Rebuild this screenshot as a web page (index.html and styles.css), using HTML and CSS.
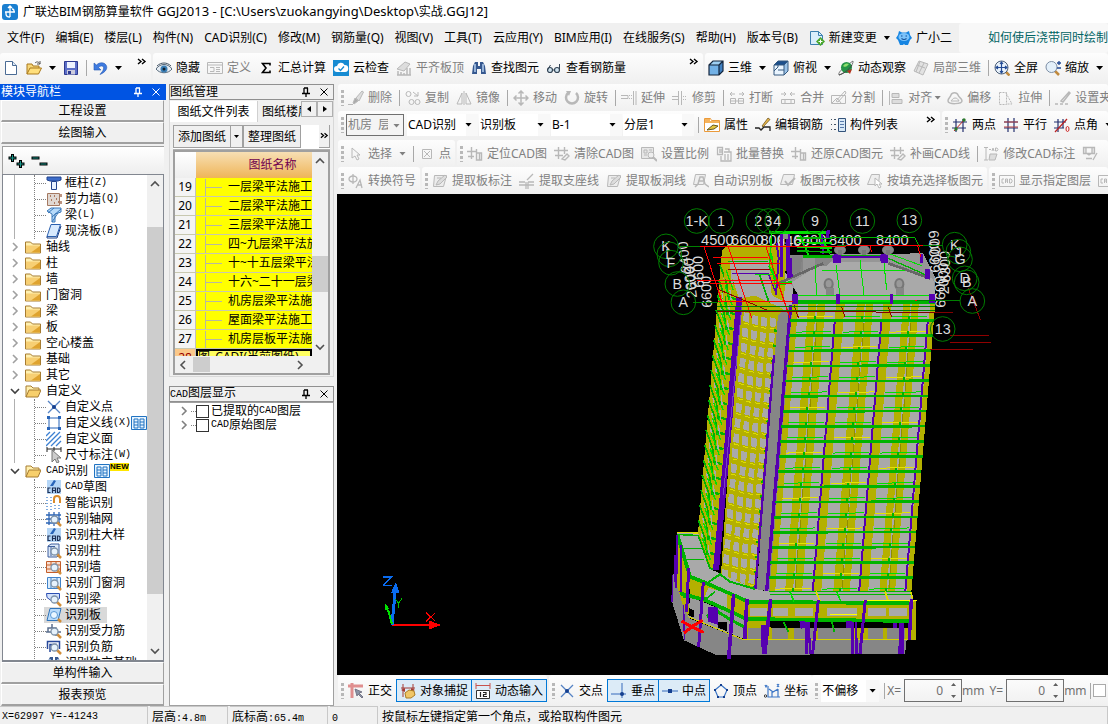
FILE: index.html
```
<!DOCTYPE html>
<html lang="zh-CN">
<head>
    <meta charset="UTF-8">
    <meta name="viewport" content="width=device-width, initial-scale=1.0">
    <title>广联达BIM钢筋算量软件 GGJ2013</title>
    <link rel="stylesheet" href="styles.css">
</head>
<body>
    <svg class="sprite" aria-hidden="true">
        <symbol id="new" viewBox="0 0 16 16"><path d="M2.500 1.500h7l4 4v9h-11z" fill="#fff" stroke="#4a6b94"/><path d="M9.500 1.500v4h4" fill="#dce8f6" stroke="#4a6b94"/></symbol>
        <symbol id="open" viewBox="0 0 16 16"><path d="M1 14V4h5l1 2h6v3" fill="#f7d779" stroke="#a9781d"/><path d="M1 14l3-6h11.500l-3 6z" fill="#ffdf7c" stroke="#a9781d"/><path d="M9 3c2-2 4-1 5 1m0-3v3h-3" fill="none" stroke="#555"/></symbol>
        <symbol id="save" viewBox="0 0 16 16"><path d="M1.500 1.500h13v13h-13z" fill="#5c6fc8" stroke="#2d3990"/><path d="M4 2h8v6H4z" fill="#eef3ff"/><path d="M4 10h8v4.500H4z" fill="#ccd"/><path d="M5 11h3v3H5z" fill="#2d3990"/></symbol>
        <symbol id="undo" viewBox="0 0 16 16"><path d="M2 3v7h7L6.500 7.500c3-3 6-1 5 1.500-.4 2-2 3.500-3.500 5.500 6-2.500 8-6.500 6-9.500S7.500 2 4.500 5z" fill="#3f7be0" stroke="#2458b4" stroke-width=".6"/></symbol>
        <symbol id="eye" viewBox="0 0 16 16"><path d="M0 9c4-6 12-6 16 0-4 5-12 5-16 0z" fill="#e7eef5" stroke="#567"/><circle cx="8" cy="9" r="3.500" fill="#3a7eb5"/><circle cx="8" cy="9" r="1.500" fill="#102030"/><path d="M1 6c4-4 10-4 14 0" fill="none" stroke="#456"/></symbol>
        <symbol id="form" viewBox="0 0 16 16"><path d="M.5 2.500h15v11H.5zM.5 5h15M3 7.500h4v4H3m6-4h4M9 9.500h4M9 11.500h4" fill="none" stroke="currentColor"/></symbol>
        <symbol id="sigma" viewBox="0 0 16 16"><path d="M12 5.500V3.500H4.500L8 8l-3.500 4.500H12v-2" fill="none" stroke="#000" stroke-width="1.600"/></symbol>
        <symbol id="cloud" viewBox="0 0 16 16"><rect width="16" height="16" fill="#168bd2"/><path d="M4 12a3 3 0 010-6 4 4 0 017.500-1A3.500 3.500 0 0112 12z" fill="#fff"/><path d="M5.500 8.500l2 2 3.500-4" fill="none" stroke="#168bd2" stroke-width="1.300"/></symbol>
        <symbol id="slope" viewBox="0 0 16 16"><path d="M1 9l8-7 5 2-6 7z" fill="#ddd" stroke="currentColor"/><path d="M2 15v-4m3 4v-3m3 3v-2m3 2V8m3 7V8M1 15h14" stroke="currentColor" stroke-width="1.500"/></symbol>
        <symbol id="find" viewBox="0 0 16 16"><path d="M2 6l2-4h3v4h2V2h3l2 4 1 8h-5V9H6v5H1z" fill="#36588f"/><path d="M4 4v8m8-8v8" stroke="#b6d0ef" stroke-width="1.500"/></symbol>
        <symbol id="glasses" viewBox="0 0 16 16"><circle cx="4" cy="10" r="2.500" fill="#cfe3ef" stroke="#345" stroke-width="1.200"/><circle cx="11" cy="10" r="2.500" fill="#cfe3ef" stroke="#345" stroke-width="1.200"/><path d="M1.500 10l3-5M13.500 10V4M6.500 10h2" fill="none" stroke="#345"/></symbol>
        <symbol id="cube" viewBox="0 0 16 16"><path d="M1 5l4-4h10l-4 4z" fill="#9fd0f3"/><path d="M11 5l4-4v10l-4 4z" fill="#3f7fc0"/><path d="M1 5h10v10H1z" fill="#72b1e6"/><path d="M1 5l4-4h10v10l-4 4H1zM1 5h10v10m0-10l4-4" fill="none" stroke="#14263d" stroke-width="1.200"/></symbol>
        <symbol id="top" viewBox="0 0 16 16"><path d="M1 5l4-4h10l-4 4z" fill="#1c4f8c"/><path d="M1 5h10v10H1z" fill="#eaf5ff"/><path d="M11 5l4-4v10l-4 4z" fill="#9cc3e8"/><path d="M1 5l4-4h10v10l-4 4H1zM1 5h10v10M1 11l4-4v-2m0 5h6m0-5l4-4" fill="none" stroke="#34597f"/></symbol>
        <symbol id="orbit" viewBox="0 0 16 16"><path d="M1 15c-2-3 8-10 14-14 1 4-8 12-14 14z" fill="none" stroke="#777"/><circle cx="8.500" cy="7.500" r="5.500" fill="#259447"/><path d="M5 6c2-3 4-3 6-2-2 2-3 4-6 2z" fill="#8fe06c"/><path d="M1 15c4-1 10-5 13-10" fill="none" stroke="#444"/><path d="M9 11l5-2-2 5z" fill="#b5341f"/></symbol>
        <symbol id="part" viewBox="0 0 16 16"><path d="M1 11L6 1l9 3-5 11zM4 5l8 3M7 1.500L3 12m8-9L6 13" fill="#e2e2e2" stroke="currentColor"/></symbol>
        <symbol id="full" viewBox="0 0 16 16"><path d="M11.500 11.500l4 4" stroke="#c08a3e" stroke-width="2.500"/><circle cx="7.500" cy="7.500" r="6.500" fill="#eaf3fc" stroke="#4c5f78"/><path d="M7.500 2.500v10m-5-5h10M6 4l1.500-2L9 4M6 11l1.500 2L9 11M4 6L2 7.500 4 9m7-3l2 1.500L11 9" fill="none" stroke="#234b95" stroke-width="1.200"/></symbol>
        <symbol id="zoom" viewBox="0 0 16 16"><path d="M10 11l4 4" stroke="#c08a3e" stroke-width="2.500"/><circle cx="6.500" cy="7" r="5.500" fill="#e4f0fa" stroke="#7d8ea5"/><path d="M14 1v4m-2-2h4M12 8h4" stroke="#234b95" stroke-width="1.300"/></symbol>
        <symbol id="change" viewBox="0 0 16 16"><path d="M1.500 1.500h8l4 4v9h-12z" fill="#d9eefb" stroke="#3b7fae"/><path d="M9.500 1.500v4h4" fill="none" stroke="#3b7fae"/><path d="M11.500 7l4.500 4.500-4.500 4.500L7 11.500z" fill="#49a72a"/><path d="M11.500 9.500v4m-2-2h4" stroke="#fff"/></symbol>
        <symbol id="robot" viewBox="0 0 16 16"><path d="M2 5l1-4 3 1.500h4L13 1l1 4 2 3-2 2-2 5H9l-1-1-1 1H4l-2-5-2-2z" fill="#1685e2"/><ellipse cx="8" cy="7" rx="5.500" ry="4" fill="#7cc3fa"/><path d="M5 6h1.500M9.500 6H11M5.500 8.500q2.500 2 5 0" fill="none" stroke="#114f96" stroke-width="1.200"/></symbol>
        <symbol id="brush" viewBox="0 0 16 16"><path d="M0 14.500h5M5 13l2-5 3 3-4 3z" fill="#aaa" stroke="currentColor"/><path d="M8 8l6-7 1.500 1L11 11z" fill="#ddd" stroke="currentColor"/></symbol>
        <symbol id="copy" viewBox="0 0 16 16"><circle cx="3.500" cy="4" r="2.500" fill="none" stroke="currentColor"/><circle cx="6.500" cy="12" r="2.500" fill="none" stroke="currentColor"/><circle cx="12.500" cy="12" r="2.500" fill="none" stroke="currentColor"/><path d="M8 2l5 4m0-4v4H9" fill="none" stroke="currentColor"/></symbol>
        <symbol id="mirror" viewBox="0 0 16 16"><path d="M6 3v11H1zM10 3v11h5zM8 1v14" fill="none" stroke="currentColor"/></symbol>
        <symbol id="move" viewBox="0 0 16 16"><path d="M8 1v14M1 8h14M5.500 3.500L8 1l2.500 2.500m-5 9L8 15l2.500-2.500m-7-7L1 8l2.500 2.500m9-5L15 8l-2.500 2.500" fill="none" stroke="currentColor" stroke-width="1.500"/></symbol>
        <symbol id="rotate" viewBox="0 0 16 16"><path d="M4 3a6 6 0 108 0" fill="none" stroke="currentColor" stroke-width="2.500"/><path d="M7 1H2l3 5z" fill="currentColor"/></symbol>
        <symbol id="extend" viewBox="0 0 16 16"><path d="M0 5.500h7v3H0M8 5.500h1m1 0h1m-3 3h1m1 0h1M12.500 1v14M15 1v14" fill="none" stroke="currentColor"/></symbol>
        <symbol id="trim" viewBox="0 0 16 16"><path d="M0 6.500h6m0 3H0M6.500 1v14m3-14v14M11 6.500h1m1 0h1m-3 3h1m1 0h1" fill="none" stroke="currentColor"/></symbol>
        <symbol id="break" viewBox="0 0 16 16"><path d="M1.500 8.500h5v5h-5zM9.500 8.500h5v5h-5zM1 11h14M1 4h5m4 0h5M3 2L1 4l2 2m10-4l2 2-2 2" fill="none" stroke="currentColor"/></symbol>
        <symbol id="merge" viewBox="0 0 16 16"><path d="M1.500 9.500h13v4h-13zM1 4h5m4 0h5M4 2l2 2-2 2m8-4l-2 2 2 2M5 9v5m6-5v5" fill="none" stroke="currentColor"/></symbol>
        <symbol id="split" viewBox="0 0 16 16"><path d="M.5 5.500h14v8H.5zM1 13l5-5 4 5M5 11L14 1l1 2-8 9z" fill="none" stroke="currentColor"/></symbol>
        <symbol id="align" viewBox="0 0 16 16"><path d="M1.500 1v14M4 3.500h7v4H4zM4 9.500h10v4H4z" fill="#ddd" stroke="currentColor"/></symbol>
        <symbol id="offset" viewBox="0 0 16 16"><path d="M1 11c0-3 2-3 3-6s6-3 7 0 4 3 4 6-14 4-14 0z" fill="none" stroke="currentColor" stroke-width="1.500"/><path d="M4 11c1-1 2-3 4-3s3 1 4 3z" fill="none" stroke="currentColor"/></symbol>
        <symbol id="stretch" viewBox="0 0 16 16"><path d="M1.500 2.500h7v12h-7zM8 3l6 11h-5" fill="none" stroke="currentColor" stroke-dasharray="2 1"/></symbol>
        <symbol id="grippt" viewBox="0 0 16 16"><path d="M0 14h3m2 0h3m2 0h3M6 11l8-9 1 1-7 9z" fill="none" stroke="currentColor" stroke-width="1.500"/></symbol>
        <symbol id="prop" viewBox="0 0 16 16"><path d="M.5 1.500h6l1 2h8v11H.5z" fill="#fff" stroke="#eb9a3a"/><path d="M1 2h5v2h9v2H1z" fill="#f5b35c"/><path d="M3 13l6-5 5 1-4 3z" fill="#e5c53d" stroke="#665820"/></symbol>
        <symbol id="rebar" viewBox="0 0 16 16"><path d="M0 11h4l2 2 3-3h6v4" fill="none" stroke="#222" stroke-width="1.300"/><path d="M7 9l6-8 2 1.500L8 10z" fill="#e8b84d" stroke="#5c4410" stroke-width=".7"/></symbol>
        <symbol id="list" viewBox="0 0 16 16"><path d="M1 2.500h1M1 7.500h1M1 12.500h1M4 2.500h2M4 7.500h2M4 12.500h2" stroke="#456"/><path d="M8.500 1.500h7v13h-7z" fill="#d7e8f7" stroke="#33527a"/><path d="M10 4.500h4m-4 3h4m-4 3h4" stroke="#5a7bab"/></symbol>
        <symbol id="two" viewBox="0 0 16 16"><path d="M4 2v13M11 2v13M1 5h14M0 11h14" stroke="#23306e" stroke-width="1.200"/><path d="M2 14L13 2" stroke="#b22"/><circle cx="12" cy="3" r="1.700" fill="#2c7a2c"/><circle cx="4" cy="12" r="1.700" fill="#2c7a2c"/></symbol>
        <symbol id="para" viewBox="0 0 16 16"><path d="M5 1v14M11 1v14M1 5h14M1 11h14" stroke="#23306e" stroke-width="1.200"/><path d="M1 5h14M1 10h14" stroke="#b44"/></symbol>
        <symbol id="angle" viewBox="0 0 16 16"><path d="M4 2v13M9 2v9M0 5h12M0 11h10" stroke="#23306e" stroke-width="1.200"/><path d="M1 15L13 2" stroke="#b22" stroke-width="1.200"/><ellipse cx="13.500" cy="12" rx="1.500" ry="2.500" fill="none" stroke="#c22"/></symbol>
        <symbol id="cursor" viewBox="0 0 16 16"><path d="M4 2v10l3-2 2 4 2-1-2-4h3z" fill="#f6f6f6" stroke="currentColor"/></symbol>
        <symbol id="dot" viewBox="0 0 16 16"><path d="M3.500 3.500h9v9h-9zM5 5l6 6m0-6l-6 6" fill="none" stroke="currentColor"/></symbol>
        <symbol id="grid" viewBox="0 0 16 16"><path d="M4.500 1v12M0 5.500h10M1 10.500h6M9.500 3v11h5V7h-5m3 0v7" fill="none" stroke="currentColor" stroke-width="1.400"/></symbol>
        <symbol id="grid2" viewBox="0 0 16 16"><path d="M4.500 1v12M10.500 1v7M0 4.500h14M1 9.500h8M8 13l5-5 2 2-4 4z" fill="none" stroke="currentColor" stroke-width="1.400"/></symbol>
        <symbol id="scale" viewBox="0 0 16 16"><path d="M.5 1.500h12v11H.5zM3 4h3v3H3zM8 4h3M3 9h3" fill="#e6e6e6" stroke="currentColor"/><circle cx="10" cy="9" r="3" fill="#eee" stroke="currentColor"/><path d="M12 11l4 4" stroke="currentColor" stroke-width="2"/></symbol>
        <symbol id="batch" viewBox="0 0 16 16"><path d="M1.500 1.500h5v7h-5zM3 4h3M3 6h3M5 10v5h10V6H8M9 8v6m3-6v6M9 3h4v3" fill="none" stroke="currentColor" stroke-width="1.300"/></symbol>
        <symbol id="page" viewBox="0 0 16 16"><path d="M2.500 2.500h12l-3 11h-10z" fill="#ececec" stroke="currentColor"/><path d="M4 12l2-4 7-6 2 2-7 7zM5 5h4" fill="#ddd" stroke="currentColor"/></symbol>
        <symbol id="mark" viewBox="0 0 16 16"><path d="M3 1v13M1 1.500h4M1 14h4M6 3.500h2M9 5l1-3 1 3m1.500-3v3H14l1-1.500L14 2z" fill="none" stroke="currentColor"/><path d="M7 8h7l-2 6H6z" fill="#ddd" stroke="currentColor"/></symbol>
        <symbol id="sweep" viewBox="0 0 16 16"><path d="M1.500 1.500h11v6h-11zM4 2v5l3 2 3-2V2M4 12.500h6M11 14l4-7" fill="#e4e4e4" stroke="currentColor" stroke-width="1.300"/></symbol>
        <symbol id="check" viewBox="0 0 16 16"><path d="M3.500 1.500h11l-2 10H.5z" fill="#eee" stroke="currentColor"/><path d="M5 8l3 4 7-7" fill="none" stroke="currentColor" stroke-width="2"/></symbol>
        <symbol id="pick" viewBox="0 0 16 16"><path d="M4.500 1.500h8l-1 10H.5z" fill="#eee" stroke="currentColor"/><path d="M8 5v8l2-2 2 4 2-1-2-3h3z" fill="#fff" stroke="currentColor"/></symbol>
        <symbol id="phi" viewBox="0 0 16 16"><ellipse cx="5" cy="6" rx="4" ry="3" fill="none" stroke="currentColor" stroke-width="1.300"/><path d="M5 1v10M8 15l4-8 2 8m-5-3h5" fill="none" stroke="currentColor" stroke-width="1.300"/></symbol>
        <symbol id="seat" viewBox="0 0 16 16"><path d="M0 9h6m3 0h6M0 12h15M7 9v7m2-7v7M8 7l6-6" fill="none" stroke="currentColor" stroke-width="1.300"/></symbol>
        <symbol id="auto" viewBox="0 0 16 16"><path d="M2.500 1.500h10l-2 10H.5z" fill="#eee" stroke="currentColor"/><path d="M2 14l3-3 2-7h3l2 7 4 3M5 8h7" fill="none" stroke="currentColor" stroke-width="1.500"/></symbol>
        <symbol id="cadbox" viewBox="0 0 16 16"><path d="M.5 2.500h15v11H.5zM5 6H3v4h2m1.500 0V6h2v4m-2-2h2M10.500 6v4h1.500l1-1V7l-1-1z" fill="none" stroke="currentColor"/></symbol>
        <symbol id="ortho" viewBox="0 0 16 16"><path d="M0 3h15M4 0v15" stroke="#e08f8f" stroke-width="3"/><path d="M7 6l7 3-3 1 4 4-1 1-4-4-1 2z" fill="#8a94a5" stroke="#778"/></symbol>
        <symbol id="snap" viewBox="0 0 16 16"><path d="M1 5h14M3 1v13M13 1v9" stroke="#a33a35"/><path d="M1 7l4-2v4zM15 7l-4-2v4z" fill="#a33a35"/><path d="M5 10l4-3 5 1 1 4-4 3H6z" fill="#f0c667" stroke="#ab7c24"/></symbol>
        <symbol id="dyn" viewBox="0 0 16 16"><path d="M1 2.500h14M1 0v6m14-6v6" stroke="#c8524d"/><path d="M1.500 7.500h13v8h-13z" fill="#fff" stroke="#333"/><path d="M5.500 9v5M8 9.500h3v2H8.500v2H12" fill="none" stroke="#222" stroke-width="1.200"/></symbol>
        <symbol id="cross" viewBox="0 0 16 16"><path d="M2 2l12 12m0-12L2 14" stroke="#5583c4" stroke-width="1.300"/><circle cx="8" cy="8" r="2" fill="#143f8f"/></symbol>
        <symbol id="perp" viewBox="0 0 16 16"><path d="M0 11h15M11 0v15" stroke="#6c95cf" stroke-width="1.500"/><circle cx="11" cy="11" r="2" fill="#143f8f"/></symbol>
        <symbol id="mid" viewBox="0 0 16 16"><path d="M0 8h16" stroke="#6c95cf" stroke-width="1.500"/><path d="M6 6h4v4H6z" fill="#143f8f"/></symbol>
        <symbol id="vertex" viewBox="0 0 16 16"><path d="M8 2l6 5-3 7H5L2 7z" fill="none" stroke="#3c76c6" stroke-width="1.200"/><path d="M7 1h2v2H7zM13 6h2v2h-2zM10 13h2v2h-2zM4 13h2v2H4zM1 6h2v2H1z" fill="#143f8f"/></symbol>
        <symbol id="coord" viewBox="0 0 16 16"><path d="M4 3v11h12M1 2l1 2 1-2M13 1l2 3m0-3l-2 3M5 6l4 3 5-3M8 14V9m6 5V6" fill="none" stroke="#3c76c6" stroke-width="1.200"/><circle cx="1.500" cy="13" r="1.200" fill="#fff" stroke="#333"/></symbol>
        <symbol id="folder" viewBox="0 0 16 16"><path d="M.5 14V3h5l2 2h8v9z" fill="#fff0b0" stroke="#a77c31"/><path d="M1 6.500h14V13.500H1z" fill="#f7cf73"/><path d="M15 7v6.500H6z" fill="#dfa32f"/></symbol>
        <symbol id="folderopen" viewBox="0 0 16 16"><path d="M1 14V3h5l2 2h6v3" fill="#fff0b0" stroke="#a77c31"/><path d="M1 14l3-7h12l-3 7z" fill="#f7cf6c" stroke="#a77c31"/></symbol>
        <symbol id="column" viewBox="0 0 16 16"><path d="M1 2h14v3l-3 1H4L1 5z" fill="#3c6cc9" stroke="#23458f"/><path d="M5.500 6.500h5v8h-5z" fill="#e9f2ff" stroke="#23458f"/></symbol>
        <symbol id="wall" viewBox="0 0 16 16"><path d="M1.500 2.500h12v12h-12z" fill="#e0d8d2" stroke="#a57961"/><path d="M4 5h1m3 0h1m-4 4h1m4-1h1m-3 4h1m3-1h1M15 3v3m0 4v3" stroke="#9a5a3b" stroke-width="1.300"/></symbol>
        <symbol id="beam" viewBox="0 0 16 16"><path d="M1 4l4-3h10v4L9 7v8H6V7z" fill="#b6dafa" stroke="#3876b7"/><path d="M2 6L8 1m-2 14l6-9M6 10l9-8" stroke="#3876b7"/></symbol>
        <symbol id="slab" viewBox="0 0 16 16"><path d="M5 1.500h9.500l-4 12H1z" fill="#d8eafe" stroke="#2a5fae"/><path d="M1 13.500V15h10l4-12" fill="none" stroke="#1b3f86"/></symbol>
        <symbol id="line" viewBox="0 0 16 16"><path d="M3 3h10v10H3z" fill="#fff" stroke="#2864b8"/><path d="M1 1h3v3H1zM12 1h3v3h-3zM1 12h3v3H1zM12 12h3v3h-3z" fill="#2864b8"/></symbol>
        <symbol id="hatch" viewBox="0 0 16 16"><path d="M0 5l4-4M0 10L9 1M0 15L14 1M5 15L15 5M10 15l5-5" stroke="#3c80d2" stroke-width="1.300"/></symbol>
        <symbol id="dimension" viewBox="0 0 16 16"><path d="M1 0v5M8 0v4m7-4v5M1 2h14" stroke="#222"/><path d="M6 3v12l3-3 2 4 2-1-2-4h4z" fill="#ccc" stroke="#777"/></symbol>
        <symbol id="cad" viewBox="0 0 16 16"><path d="M1 1h14v14H1z" fill="#b5d6f7"/><path d="M4 7l4-6 2 1-3 5z" fill="#2864b8"/><path d="M4.500 9H2v4.500h2.500M6.500 14V9h3v5m-3-2.500h3M11.500 9v4.500H13l1-1V10l-1-1z" fill="none" stroke="#1d2f55" stroke-width="1.200"/></symbol>
        <symbol id="magnet" viewBox="0 0 16 16"><path d="M1 2v13M5 2v13m4-5v5m4-5v5" stroke="#3c80d2" stroke-width="1.300" stroke-dasharray="1 2"/><path d="M8 8V4a3 3 0 016 0v4" fill="none" stroke="#d98b2b" stroke-width="2"/></symbol>
        <symbol id="lens" viewBox="0 0 16 16"><path d="M11 11l4 4" stroke="#d18d38" stroke-width="2.500"/><circle cx="8.500" cy="8.500" r="3.500" fill="#e6f2fc" stroke="#7f93a8" stroke-width="1.300"/></symbol>
        <symbol id="scan" viewBox="0 0 16 16"><path d="M3 1v13M8 1v14m5-14v13M0 4h15M0 8h15M0 12h14" stroke="#2d65b5" stroke-width="1.300"/><use href="#lens"/></symbol>
        <symbol id="scancol" viewBox="0 0 16 16"><path d="M2 3l3-2h8v11l-2 2H2z" fill="#dbe8f8" stroke="#3e5f9d"/><path d="M2 3.500h7M5 4v9" stroke="#3e5f9d"/><use href="#lens"/></symbol>
        <symbol id="scanwall" viewBox="0 0 16 16"><path d="M.5 2.500h14v11H.5zM1 6h13M1 10h13M5 3v3m5-3v3" fill="#f8ded0" stroke="#c35e2a"/><use href="#lens"/></symbol>
        <symbol id="scandoor" viewBox="0 0 16 16"><path d="M1.500 2.500h13v11h-13zM5 3v10m6-10v10" fill="#d9ecfd" stroke="#3f82c9"/><use href="#lens"/></symbol>
        <symbol id="scanbeam" viewBox="0 0 16 16"><path d="M.5 2.500h13v5l-3 2H5l-4-3z" fill="#d2e1fb" stroke="#2c4fb2"/><use href="#lens"/></symbol>
        <symbol id="scanbar" viewBox="0 0 16 16"><path d="M0 9h15M2 9V5h8v8M6 1v4" fill="none" stroke="#5b6f8e" stroke-width="1.500"/><use href="#lens"/></symbol>
        <symbol id="scanneg" viewBox="0 0 16 16"><path d="M1.500 10V2.500h12V10M4 13V5.500h7" fill="none" stroke="#27489a" stroke-width="1.500"/><use href="#lens"/></symbol>
        <symbol id="scanslab" viewBox="0 0 16 16"><path d="M4 1.500h11l-3 12H1z" fill="#b9dbfa" stroke="#2e73ba"/><circle cx="8" cy="8" r="3.500" fill="#e9f6ff" stroke="#5b9ad6"/><path d="M12 12l3 3" stroke="#d18d38" stroke-width="2.500"/></symbol>
        <symbol id="book" viewBox="0 0 16 16"><path d="M.5 1.500h15v13H.5z" fill="#e8f5ff" stroke="#2173c2"/><path d="M3 4h4v9H3zM9 4h4v9H9zM3 7h4m-4 3h4m2-3h4m-4 3h4" fill="none" stroke="#2173c2"/></symbol>
        <symbol id="pin" viewBox="0 0 10 10"><path d="M3 1v5M6.500 1v5M3 1h4M1 6.500h8M5 6.500V10" fill="none" stroke="currentColor" stroke-width="1.300"/></symbol>
        <symbol id="close" viewBox="0 0 10 10"><path d="M1.500 1.500l7 7m0-7l-7 7" stroke="currentColor"/></symbol>
        <symbol id="right" viewBox="0 0 10 10"><path d="M3 1l4 4-4 4" fill="none" stroke="currentColor" stroke-width="1.600"/></symbol>
        <symbol id="left" viewBox="0 0 10 10"><path d="M7 1L3 5l4 4" fill="none" stroke="currentColor" stroke-width="1.600"/></symbol>
        <symbol id="down" viewBox="0 0 10 10"><path d="M1 3l4 4 4-4" fill="none" stroke="currentColor" stroke-width="1.600"/></symbol>
        <symbol id="up" viewBox="0 0 10 10"><path d="M1 7l4-4 4 4" fill="none" stroke="currentColor" stroke-width="1.600"/></symbol>
        <symbol id="more" viewBox="0 0 10 8"><path d="M1 1l3 2.500L1 6m4-5l3 2.500L5 6" fill="none" stroke="#000" stroke-width="1.400"/></symbol>
    </svg>

    <header class="titlebar">
        <svg class="logo" viewBox="0 0 16 16"><rect width="16" height="16" rx="3" fill="#1a7fd0"/><path d="M8 3v10M3 8h10M6 4l2-2 2 2M4 8v2q0 3 4 3m4-5V7q0-2-2-2" fill="none" stroke="#fff" stroke-width="1.300"/></svg>
        <span>广联达BIM钢筋算量软件 <span class="path">GGJ2013 - [C:\Users\zuokangying\Desktop\</span>实战<span class="path">.GGJ12]</span></span>
    </header>

    <nav class="menubar">
        <button>文件(F)</button><button>编辑(E)</button><button>楼层(L)</button><button>构件(N)</button><button>CAD识别(C)</button><button>修改(M)</button><button>钢筋量(Q)</button><button>视图(V)</button><button>工具(T)</button><button>云应用(Y)</button><button>BIM应用(I)</button><button>在线服务(S)</button><button>帮助(H)</button><button>版本号(B)</button>
        <button class="tool"><svg><use href="#change"/></svg>新建变更</button>
        <button class="drop" aria-label="新建变更选项"></button>
        <button class="tool"><svg><use href="#robot"/></svg>广小二</button>
        <a class="tip" href="#">如何使后浇带同时绘制</a>
    </nav>

    <div class="row main-tools">
        <div class="strip file">
            <button class="tool" aria-label="新建"><svg><use href="#new"/></svg></button>
            <button class="tool" aria-label="打开"><svg><use href="#open"/></svg></button>
            <button class="drop" aria-label="最近文件"></button>
            <button class="tool" aria-label="保存"><svg><use href="#save"/></svg></button>
            <i class="sep"></i>
            <button class="tool" aria-label="撤销"><svg><use href="#undo"/></svg></button>
            <button class="drop" aria-label="撤销列表"></button>
            <button class="more" aria-label="更多"><svg><use href="#more"/></svg></button>
        </div>
        <div class="strip calc">
            <button class="tool"><svg><use href="#eye"/></svg>隐藏</button>
            <button class="tool" disabled><svg><use href="#form"/></svg>定义</button>
            <button class="tool"><svg><use href="#sigma"/></svg>汇总计算</button>
            <button class="tool"><svg><use href="#cloud"/></svg>云检查</button>
            <button class="tool" disabled><svg><use href="#slope"/></svg>平齐板顶</button>
            <button class="tool"><svg><use href="#find"/></svg>查找图元</button>
            <button class="tool"><svg><use href="#glasses"/></svg>查看钢筋量</button>
            <button class="more" aria-label="更多"><svg><use href="#more"/></svg></button>
        </div>
        <div class="strip grow">
            <button class="tool"><svg><use href="#cube"/></svg>三维</button>
            <button class="drop" aria-label="三维选项"></button>
            <button class="tool"><svg><use href="#top"/></svg>俯视</button>
            <button class="drop" aria-label="俯视选项"></button>
            <button class="tool"><svg><use href="#orbit"/></svg>动态观察</button>
            <button class="tool" disabled><svg><use href="#part"/></svg>局部三维</button>
            <i class="sep"></i>
            <button class="tool"><svg><use href="#full"/></svg>全屏</button>
            <button class="tool"><svg><use href="#zoom"/></svg>缩放</button>
            <button class="drop" aria-label="缩放选项"></button>
        </div>
    </div>

    <div class="work">
        <aside class="nav">
            <div class="caption active"><span>模块导航栏</span><button aria-label="固定"><svg><use href="#pin"/></svg></button><button aria-label="关闭"><svg><use href="#close"/></svg></button></div>
            <button class="stack">工程设置</button>
            <button class="stack">绘图输入</button>
            <div class="expand">
                <button aria-label="全部展开"><svg viewBox="0 0 18 16"><path d="M4.500 1v8M.5 5h8M12.500 7v8M8.500 11h8" stroke="#000" stroke-width="3"/><path d="M4.500 2v6M1.500 5h6M12.500 8v6M9.500 11h6" stroke="#169488"/></svg></button>
                <button aria-label="全部折叠"><svg viewBox="0 0 18 16"><path d="M.5 5h8M8.500 11h8" stroke="#000" stroke-width="3"/><path d="M1.500 5h6M9.500 11h6" stroke="#169488"/></svg></button>
            </div>
            <div class="treebox">
                <ul class="tree">
                    <li>
                        <ul class="more-below">
                            <li><svg><use href="#column"/></svg>框柱<b>(Z)</b></li>
                            <li><svg><use href="#wall"/></svg>剪力墙<b>(Q)</b></li>
                            <li><svg><use href="#beam"/></svg>梁<b>(L)</b></li>
                            <li><svg><use href="#slab"/></svg>现浇板<b>(B)</b></li>
                        </ul>
                    </li>
                    <li><div class="node"><svg class="chev"><use href="#right"/></svg><svg><use href="#folder"/></svg>轴线</div></li>
                    <li><div class="node"><svg class="chev"><use href="#right"/></svg><svg><use href="#folder"/></svg>柱</div></li>
                    <li><div class="node"><svg class="chev"><use href="#right"/></svg><svg><use href="#folder"/></svg>墙</div></li>
                    <li><div class="node"><svg class="chev"><use href="#right"/></svg><svg><use href="#folder"/></svg>门窗洞</div></li>
                    <li><div class="node"><svg class="chev"><use href="#right"/></svg><svg><use href="#folder"/></svg>梁</div></li>
                    <li><div class="node"><svg class="chev"><use href="#right"/></svg><svg><use href="#folder"/></svg>板</div></li>
                    <li><div class="node"><svg class="chev"><use href="#right"/></svg><svg><use href="#folder"/></svg>空心楼盖</div></li>
                    <li><div class="node"><svg class="chev"><use href="#right"/></svg><svg><use href="#folder"/></svg>基础</div></li>
                    <li><div class="node"><svg class="chev"><use href="#right"/></svg><svg><use href="#folder"/></svg>其它</div></li>
                    <li>
                        <div class="node open"><svg class="chev"><use href="#down"/></svg><svg><use href="#folderopen"/></svg>自定义</div>
                        <ul class="more-below">
                            <li><svg><use href="#cross"/></svg>自定义点</li>
                            <li><svg><use href="#line"/></svg>自定义线<b>(X)</b><svg class="badge"><use href="#book"/></svg></li>
                            <li><svg><use href="#hatch"/></svg>自定义面</li>
                            <li><svg><use href="#dimension"/></svg>尺寸标注<b>(W)</b></li>
                        </ul>
                    </li>
                    <li>
                        <div class="node open"><svg class="chev"><use href="#down"/></svg><svg><use href="#folderopen"/></svg><b>CAD</b>识别<svg class="badge wide"><use href="#book"/></svg><em>NEW</em></div>
                        <ul>
                            <li><svg><use href="#cad"/></svg><b>CAD</b>草图</li>
                            <li><svg><use href="#magnet"/></svg>智能识别</li>
                            <li><svg><use href="#scan"/></svg>识别轴网</li>
                            <li><svg><use href="#cad"/></svg>识别柱大样</li>
                            <li><svg><use href="#scancol"/></svg>识别柱</li>
                            <li><svg><use href="#scanwall"/></svg>识别墙</li>
                            <li><svg><use href="#scandoor"/></svg>识别门窗洞</li>
                            <li><svg><use href="#scanbeam"/></svg>识别梁</li>
                            <li class="selected"><svg><use href="#scanslab"/></svg>识别板</li>
                            <li><svg><use href="#scanbar"/></svg>识别受力筋</li>
                            <li><svg><use href="#scanneg"/></svg>识别负筋</li>
                            <li><svg><use href="#find"/></svg>识别独立基础</li>
                        </ul>
                    </li>
                </ul>
                <div class="vbar"><svg><use href="#up"/></svg><i class="thumb"></i><svg><use href="#down"/></svg></div>
            </div>
            <button class="stack">单构件输入</button>
            <button class="stack">报表预览</button>
        </aside>

        <aside class="side">
            <div class="caption"><span>图纸管理</span><button aria-label="固定"><svg><use href="#pin"/></svg></button><button aria-label="关闭"><svg><use href="#close"/></svg></button></div>
            <section class="drawings">
                <div class="tabs"><button class="on">图纸文件列表</button><button class="cut">图纸楼层</button><button class="step" aria-label="上一页"><i class="lt"></i></button><button class="step" aria-label="下一页"><i class="gt"></i></button></div>
                <div class="actions"><button>添加图纸</button><button class="split" aria-label="添加图纸选项"><i class="tri"></i></button><button>整理图纸</button><button class="over" aria-label="更多"><svg><use href="#more"/></svg></button></div>
                <div class="gridbox">
                    <div class="gridtop">
                        <div class="clip">
                            <table>
                                <thead><tr><th></th><th>图纸名称</th></tr></thead>
                                <tbody>
                                    <tr><td>19</td><td>一层梁平法施工图</td></tr>
                                    <tr><td>20</td><td>二层梁平法施工图</td></tr>
                                    <tr><td>21</td><td>三层梁平法施工图</td></tr>
                                    <tr><td>22</td><td>四~九层梁平法施工图</td></tr>
                                    <tr><td>23</td><td>十~十五层梁平法施工图</td></tr>
                                    <tr><td>24</td><td>十六~二十一层梁平法施工图</td></tr>
                                    <tr><td>25</td><td>机房层梁平法施工图</td></tr>
                                    <tr><td>26</td><td>屋面梁平法施工图</td></tr>
                                    <tr><td>27</td><td>机房层板平法施工图</td></tr>
                                    <tr class="current"><td>28</td><td>图_CADI(当前图纸)</td></tr>
                                </tbody>
                            </table>
                        </div>
                        <div class="vbar"><svg><use href="#up"/></svg><i class="thumb"></i><svg><use href="#down"/></svg></div>
                    </div>
                    <div class="hbar"><svg><use href="#left"/></svg><i class="thumb"></i><svg><use href="#right"/></svg></div>
                </div>
            </section>
            <div class="caption second"><span><b>CAD</b>图层显示</span><button aria-label="固定"><svg><use href="#pin"/></svg></button><button aria-label="关闭"><svg><use href="#close"/></svg></button></div>
            <section class="layers">
                <label><svg><use href="#right"/></svg><i></i><input type="checkbox">已提取的<b>CAD</b>图层</label>
                <label><svg><use href="#right"/></svg><i></i><input type="checkbox"><b>CAD</b>原始图层</label>
            </section>
        </aside>

        <main>
            <div class="bars">
                <div class="row">
                    <div class="strip grow">
                        <i class="grip"></i>
                        <button class="tool" disabled><svg><use href="#brush"/></svg>删除</button>
                        <i class="sep"></i>
                        <button class="tool" disabled><svg><use href="#copy"/></svg>复制</button>
                        <button class="tool" disabled><svg><use href="#mirror"/></svg>镜像</button>
                        <i class="sep"></i>
                        <button class="tool" disabled><svg><use href="#move"/></svg>移动</button>
                        <button class="tool" disabled><svg><use href="#rotate"/></svg>旋转</button>
                        <i class="sep"></i>
                        <button class="tool" disabled><svg><use href="#extend"/></svg>延伸</button>
                        <button class="tool" disabled><svg><use href="#trim"/></svg>修剪</button>
                        <i class="sep"></i>
                        <button class="tool" disabled><svg><use href="#break"/></svg>打断</button>
                        <button class="tool" disabled><svg><use href="#merge"/></svg>合并</button>
                        <button class="tool" disabled><svg><use href="#split"/></svg>分割</button>
                        <i class="sep"></i>
                        <button class="tool" disabled><svg><use href="#align"/></svg>对齐<i class="tri"></i></button>
                        <button class="tool" disabled><svg><use href="#offset"/></svg>偏移</button>
                        <button class="tool" disabled><svg><use href="#stretch"/></svg>拉伸</button>
                        <i class="sep"></i>
                        <button class="tool" disabled><svg><use href="#grippt"/></svg>设置夹点</button>
                    </div>
                </div>
                <div class="row">
                    <div class="strip member">
                        <i class="grip"></i>
                        <div class="combos">
                            <label class="combo framed"><select aria-label="楼层" disabled><option>机房&nbsp;&nbsp;层</option></select></label>
                            <label class="combo"><select aria-label="构件大类"><option>CAD识别</option></select></label>
                            <label class="combo"><select aria-label="构件类型"><option>识别板</option></select></label>
                            <label class="combo"><select aria-label="构件"><option>B-1</option></select></label>
                            <label class="combo"><select aria-label="分层"><option>分层1</option></select></label>
                        </div>
                        <i class="sep"></i>
                        <button class="tool"><svg><use href="#prop"/></svg>属性</button>
                        <button class="tool"><svg><use href="#rebar"/></svg>编辑钢筋</button>
                        <button class="tool"><svg><use href="#list"/></svg>构件列表</button>
                        <button class="more" aria-label="更多"><svg><use href="#more"/></svg></button>
                    </div>
                    <div class="strip grow">
                        <i class="grip"></i>
                        <button class="tool"><svg><use href="#two"/></svg>两点</button>
                        <button class="tool"><svg><use href="#para"/></svg>平行</button>
                        <button class="tool"><svg><use href="#angle"/></svg>点角</button>
                        <button class="drop" aria-label="点角选项"></button>
                    </div>
                </div>
            </div>
            <div class="bars">
                <div class="row">
                    <div class="strip">
                        <i class="grip"></i>
                        <button class="tool" disabled><svg><use href="#cursor"/></svg>选择</button>
                        <button class="drop" disabled aria-label="选择方式"></button>
                        <i class="sep"></i>
                        <button class="tool" disabled><svg><use href="#dot"/></svg>点</button>
                    </div>
                    <div class="strip grow">
                        <i class="grip"></i>
                        <button class="tool" disabled><svg><use href="#grid"/></svg>定位CAD图</button>
                        <button class="tool" disabled><svg><use href="#grid2"/></svg>清除CAD图</button>
                        <button class="tool" disabled><svg><use href="#scale"/></svg>设置比例</button>
                        <button class="tool" disabled><svg><use href="#batch"/></svg>批量替换</button>
                        <button class="tool" disabled><svg><use href="#grid"/></svg>还原CAD图元</button>
                        <button class="tool" disabled><svg><use href="#grid2"/></svg>补画CAD线</button>
                        <i class="sep"></i>
                        <button class="tool" disabled><svg><use href="#mark"/></svg>修改CAD标注</button>
                        <button class="tool" disabled aria-label="图层刷"><svg><use href="#sweep"/></svg></button>
                    </div>
                </div>
                <div class="row">
                    <div class="strip">
                        <i class="grip"></i>
                        <button class="tool" disabled><svg><use href="#phi"/></svg>转换符号</button>
                    </div>
                    <div class="strip">
                        <i class="grip"></i>
                        <button class="tool" disabled><svg><use href="#page"/></svg>提取板标注</button>
                        <button class="tool" disabled><svg><use href="#seat"/></svg>提取支座线</button>
                        <button class="tool" disabled><svg><use href="#page"/></svg>提取板洞线</button>
                        <button class="tool" disabled><svg><use href="#auto"/></svg>自动识别板</button>
                        <button class="tool" disabled><svg><use href="#check"/></svg>板图元校核</button>
                        <button class="tool" disabled><svg><use href="#pick"/></svg>按填充选择板图元</button>
                    </div>
                    <div class="strip grow">
                        <i class="grip"></i>
                        <button class="tool" disabled><svg><use href="#cadbox"/></svg>显示指定图层</button>
                        <button class="tool" disabled aria-label="隐藏指定图层"><svg><use href="#cadbox"/></svg></button>
                    </div>
                </div>
            </div>

            <div class="viewport">
                <svg id="model" viewBox="-909 -3 2313 1443" role="img" aria-label="三维模型"></svg>
            </div>

            <div class="row bottom">
                <div class="strip">
                    <i class="grip"></i>
                    <button class="tool"><svg><use href="#ortho"/></svg>正交</button>
                    <div class="toggles"><button class="tool on"><svg><use href="#snap"/></svg>对象捕捉</button><button class="tool on"><svg><use href="#dyn"/></svg>动态输入</button></div>
                </div>
                <div class="strip">
                    <i class="grip"></i>
                    <button class="tool"><svg><use href="#cross"/></svg>交点</button>
                    <div class="toggles"><button class="tool on"><svg><use href="#perp"/></svg>垂点</button><button class="tool on"><svg><use href="#mid"/></svg>中点</button></div>
                    <button class="tool"><svg><use href="#vertex"/></svg>顶点</button>
                    <button class="tool"><svg><use href="#coord"/></svg>坐标</button>
                </div>
                <div class="strip grow offset">
                    <i class="grip"></i>
                    <label class="combo short"><select aria-label="偏移方式"><option>不偏移</option></select></label>
                    <i class="sep"></i>
                    <label class="spin">X= <input type="text" value="0" disabled><i class="arrows"></i>mm</label>
                    <label class="spin">Y= <input type="text" value="0" disabled><i class="arrows"></i>mm</label>
                    <i class="sep"></i>
                    <input type="checkbox" aria-label="旋转" disabled>
                </div>
            </div>
        </main>
    </div>

    <footer class="status">
        <span class="xy">X=62997 Y=-41243</span>
        <span class="floor">层高<b>:4.8m</b></span>
        <span class="level">底标高<b>:65.4m</b></span>
        <span class="count"><b>0</b></span>
        <span class="hint">按鼠标左键指定第一个角点，或拾取构件图元</span>
    </footer>

    <script src="model.js"></script>
</body>
</html>
```
FILE: styles.css
```
* {
    box-sizing: border-box;
}
body {
    margin: 0;
    height: 100vh;
    display: flex;
    flex-direction: column;
    overflow: hidden;
    background: #f0f0f0;
    color: #000;
    font: 12px/16px "Noto Sans", "Noto Sans CJK SC", sans-serif;
}
button, select, input {
    font: inherit;
    color: inherit;
    margin: 0;
    padding: 0;
    border: 0;
    background: none;
    white-space: nowrap;
}
ul {
    list-style: none;
    margin: 0;
    padding: 0;
}
svg {
    flex: none;
}
b {
    font: 10px/16px "Liberation Mono", monospace;
}
.sprite {
    position: absolute;
    width: 0;
    height: 0;
}

/* title and menu */
.titlebar {
    flex: none;
    height: 23px;
    display: flex;
    align-items: center;
    gap: 5px;
    padding-left: 2px;
    background: #fff;
    white-space: nowrap;
}
.titlebar .path {
    font-size: 13px;
}
.logo {
    width: 16px;
    height: 16px;
}
.menubar {
    flex: none;
    height: 30px;
    display: flex;
    align-items: center;
    gap: 11px;
    padding-left: 7px;
    overflow: hidden;
}
.menubar .tool {
    margin-right: -4px;
}
.menubar .drop {
    margin-right: -5px;
}
.tip {
    flex: 1 0 auto;
    align-self: stretch;
    padding-left: 29px;
    background: #f8f8f8;
    border-radius: 3px;
    color: #006464;
    line-height: 30px;
    text-decoration: none;
}

/* tool strips */
.row {
    display: flex;
    gap: 2px;
    height: 27px;
    overflow: hidden;
}
.main-tools {
    flex: none;
    height: 31px;
    padding-bottom: 1px;
}
.strip {
    flex: none;
    display: flex;
    align-items: center;
    gap: 7px;
    padding: 0 4px 0 3px;
    border-radius: 3px;
    background: linear-gradient(#fdfdfd, #f0f0f0);
    overflow: hidden;
}
.strip > * {
    flex: none;
}
.strip.grow {
    flex: 1 1 0;
}
.file {
    width: 151px;
}
.calc {
    width: 550px;
}
.member {
    width: 602px;
}
.tool {
    display: flex;
    align-items: center;
    gap: 4px;
}
.tool svg {
    width: 16px;
    height: 16px;
}
.tool:disabled {
    color: #808080;
}
.tool:disabled svg {
    color: #b8b8b8;
}
.sep {
    width: 1px;
    height: 16px;
    margin-right: -2px;
    background: #a8a8a8;
}
.grip {
    width: 3px;
    height: 16px;
    margin-right: -3px;
    background: repeating-linear-gradient(#b8b8b8 0 3px, transparent 3px 5px);
}
.drop, .tri {
    width: 7px;
    height: 4px;
    background: #000;
    clip-path: polygon(0 0, 100% 0, 50% 100%);
}
.tool .tri {
    margin: 0 -1px 0 -2px;
}
.drop:disabled, .tool:disabled .tri {
    background: #808080;
}
.more {
    margin-left: auto;
    align-self: flex-start;
    line-height: 0;
}
.more svg {
    width: 10px;
    height: 8px;
    margin-top: 5px;
}
.combos {
    display: flex;
    gap: 1px;
    margin-left: -2px;
    margin-right: -3px;
}
.combo {
    position: relative;
    width: 71px;
    height: 22px;
    background: linear-gradient(90deg, #fff 59px, #f8f8f8 59px);
}
.combo select {
    width: 100%;
    height: 100%;
    padding-left: 1px;
    appearance: none;
    outline: none;
}
.combo::after {
    content: "";
    position: absolute;
    right: 6px;
    top: 9px;
    width: 7px;
    height: 4px;
    background: #000;
    clip-path: polygon(0 0, 100% 0, 50% 100%);
}
.framed {
    width: 58px;
    margin-right: 2px;
    border: 1px solid #707070;
    background: #f4f4f4;
}
.framed select {
    padding-right: 15px;
    color: #808080;
    opacity: 1;
}
.framed::after {
    right: 3px;
    background: #808080;
}

/* panels */
.work {
    flex: 1;
    min-height: 0;
    display: flex;
    gap: 3px;
}
.nav {
    flex: none;
    width: 166px;
    display: flex;
    flex-direction: column;
}
.side {
    flex: none;
    width: 165px;
    display: flex;
    flex-direction: column;
}
.caption {
    flex: none;
    height: 16px;
    display: flex;
    align-items: center;
    gap: 8px;
    padding-right: 4px;
    border: 1px solid #909090;
    line-height: 14px;
    white-space: nowrap;
}
.caption span {
    flex: 1;
}
.caption button {
    width: 10px;
    height: 10px;
    line-height: 0;
}
.caption svg {
    width: 10px;
    height: 10px;
}
.caption.active {
    border-color: #0054e3;
    background: #0054e3;
    color: #fff;
}
.stack {
    flex: none;
    height: 22px;
    margin: 0 2px 0 1px;
    border: 1px solid #fff;
    border-right-color: #a0a0a0;
    border-bottom: 2px solid #a0a0a0;
    background: #f0f0f0;
}
.expand {
    flex: none;
    height: 28px;
    display: flex;
    align-items: center;
    gap: 5px;
    margin: 2px 2px 0;
    padding-left: 5px;
    border-top: 1px solid #a0a0a0;
    border-left: 1px solid #a0a0a0;
    background: linear-gradient(#fff, #eee);
}
.expand svg {
    display: block;
    width: 18px;
    height: 16px;
}
.treebox {
    flex: 1;
    min-height: 0;
    display: flex;
    margin: 0 2px;
    border: 1px solid #828790;
    border-bottom-width: 2px;
    background: #fff;
}
.tree {
    flex: 1;
    overflow: hidden;
    line-height: 16px;
    white-space: nowrap;
}
.tree svg {
    width: 16px;
    height: 16px;
}
.tree .chev {
    width: 10px;
    height: 10px;
    margin-right: 5px;
    color: #a0a0a0;
}
.tree .open .chev {
    color: #404040;
}
.node {
    height: 16px;
    display: flex;
    align-items: center;
    padding-left: 7px;
}
.node svg + svg {
    margin-right: 5px;
}
.tree ul {
    margin-left: 31px;
    border-left: 1px dotted #808080;
}
.tree .more-below {
    box-shadow: -19px 0 0 #fff, -20px 0 0 #b0b0b0;
}
.tree ul li {
    height: 16px;
    display: flex;
    align-items: center;
}
.tree ul li::before {
    content: "";
    width: 11px;
    border-top: 1px dotted #808080;
}
.tree ul li svg:first-of-type {
    margin-right: 3px;
}
.tree .selected {
    width: 72px;
    background: linear-gradient(90deg, #fff 9px, #d9d9d9 9px);
}
.tree .node .wide {
    margin: 0 0 0 6px;
}
.tree em {
    align-self: flex-start;
    background: #ffe600;
    font: bold 8px/8px "Liberation Sans", sans-serif;
}
.vbar {
    flex: none;
    width: 16px;
    display: flex;
    flex-direction: column;
    align-items: center;
    padding: 4px 0;
    background: #f0f0f0;
    color: #505050;
}
.vbar svg, .hbar svg {
    width: 10px;
    height: 10px;
}
.vbar .thumb {
    width: 100%;
    background: #cdcdcd;
}
.nav .vbar .thumb {
    height: 77%;
    margin-top: 38px;
    margin-bottom: auto;
}

/* drawing manager */
.drawings {
    flex: none;
    display: flex;
    flex-direction: column;
    border: 1px solid #d8d8d8;
    border-top: 0;
    padding: 1px 3px 1px;
}
.tabs {
    display: flex;
    height: 21px;
    margin: 0 -3px;
}
.tabs .on {
    width: 88px;
    background: #fff;
    border-right: 1px solid #d0d0d0;
}
.tabs .cut {
    flex: 1;
    min-width: 0;
    padding-left: 4px;
    overflow: hidden;
    text-align: left;
}
.tabs .step {
    width: 16px;
    height: 16px;
    border: 1px solid #b0b0b0;
}
.lt, .gt {
    display: block;
    width: 4px;
    height: 6px;
    margin: auto;
    background: #000;
    clip-path: polygon(0 50%, 100% 0, 100% 100%);
}
.gt {
    clip-path: polygon(0 0, 100% 50%, 0 100%);
}
.actions {
    display: flex;
    height: 25px;
    margin: 3px 0 0;
    border-bottom: 1px solid #b0b0b0;
    background: #fff;
}
.actions button {
    width: 58px;
    height: 23px;
    border: 1px solid #a0a0a0;
    background: #f0f0f0;
}
.actions .split {
    width: 13px;
    margin-left: -1px;
}
.actions .split i {
    display: block;
    width: 5px;
    height: 3px;
    margin: auto;
}
.actions .over {
    width: 11px;
    margin-left: auto;
    border-width: 0 1px 1px 0;
}
.actions .over svg {
    width: 9px;
    height: 8px;
}
.gridbox {
    border: 2px solid #a0a0a0;
    background: #f0f0f0;
}
.gridtop {
    display: flex;
    height: 204px;
}
.clip {
    flex: 1;
    min-width: 0;
    overflow: hidden;
}
table {
    width: 100%;
    border-spacing: 0;
    table-layout: fixed;
}
th, td {
    height: 19px;
    padding: 0;
    white-space: nowrap;
    overflow: hidden;
}
th {
    height: 26px;
    padding-left: 37px;
    background: linear-gradient(#f7dfb4, #efb558);
    color: #700050;
    font-weight: normal;
}
th:first-child {
    width: 21px;
    padding: 0;
    background: linear-gradient(#fff, #eee);
}
td {
    border-bottom: 1px solid #c8c8b0;
    background: #ff0;
    line-height: 16px;
}
td:first-child {
    background: #f4f4f4;
    border-right: 1px solid #c0c0c0;
    text-align: center;
}
td + td::before {
    content: "";
    display: inline-block;
    width: 16px;
    height: 18px;
    margin: -2px 6px -2px 9px;
    border-left: 1px solid #b8b8a0;
    background: linear-gradient(#b8b8a0, #b8b8a0) 0 50% / 100% 1px no-repeat;
    vertical-align: middle;
}
.current td + td {
    background: #ffff60;
    border: 2px solid #000;
    line-height: 12px;
    vertical-align: top;
}
.current td + td::before {
    display: none;
}
.current td:first-child {
    background: #fbc88a;
    color: #900;
}
.gridtop .thumb {
    height: 36px;
    margin-top: 90px;
    margin-bottom: auto;
}
.hbar {
    height: 17px;
    display: flex;
    align-items: center;
    padding: 0 23px 0 3px;
    color: #505050;
}
.hbar .thumb {
    width: 17px;
    height: 15px;
    margin: 0 auto 0 5px;
    background: #cdcdcd;
}
.second {
    margin-top: 9px;
}
.layers {
    flex: 1;
    padding: 1px 0 0 9px;
    border: 1px solid #a0a0a0;
    background: #fff;
}
.layers label {
    height: 14px;
    display: flex;
    align-items: center;
    line-height: 14px;
    white-space: nowrap;
}
.layers svg {
    width: 10px;
    height: 10px;
    color: #808080;
}
.layers i {
    width: 5px;
    margin-left: 2px;
    border-top: 1px dotted #808080;
}
input[type="checkbox"] {
    flex: none;
    width: 13px;
    height: 13px;
    margin-right: 2px;
    appearance: none;
    border: 1px solid #333;
    background: #fff;
}
input[type="checkbox"]:disabled {
    border-color: #aaa;
}

/* drawing area */
main {
    flex: 1;
    min-width: 0;
    display: flex;
    flex-direction: column;
}
.bars {
    flex: none;
    padding: 0 0 0 1px;
}
.bars + .bars {
    padding-top: 2px;
}
.viewport {
    flex: 1;
    min-height: 0;
    overflow: hidden;
    background: #000;
}
#model {
    display: block;
    width: 771px;
    height: 481px;
    font-family: "Liberation Sans", sans-serif;
}
.bottom {
    flex: none;
    height: 31px;
    padding-left: 1px;
}
.toggles {
    display: flex;
    margin-left: -3px;
    margin-right: -3px;
}
.tool.on {
    height: 23px;
    margin-right: -1px;
    padding: 0 3px;
    border: 1px solid #0078d7;
    background: #dcebf7;
}
.offset {
    margin-left: -2px;
}
.offset .sep {
    margin: 0 -5px 0 -2px;
}
.short {
    width: 58px;
    margin-left: -1px;
    background: linear-gradient(90deg, #fff 45px, #f8f8f8 45px);
}
.short::after {
    right: 3px;
}
.spin {
    display: flex;
    align-items: center;
    margin-right: -2px;
    color: #707070;
}
.spin input {
    width: 58px;
    height: 23px;
    margin: 0 2px 0 3px;
    padding-right: 18px;
    border: 1px solid #707070;
    text-align: right;
}
.arrows {
    width: 5px;
    height: 15px;
    margin: 0 6px 0 -13px;
    background: #606060;
    clip-path: polygon(50% 0, 100% 3px, 50% 3px, 50% 12px, 100% 12px, 50% 100%, 0 12px, 50% 12px, 50% 3px, 0 3px);
}

/* status */
.status {
    flex: none;
    height: 18px;
    display: flex;
    gap: 2px;
    white-space: nowrap;
    overflow: hidden;
}
.status span {
    flex: none;
    height: 18px;
    padding: 2px 2px 0;
    border: 1px solid #c8c8c8;
    border-width: 1px 1px 0 0;
}
.status .xy {
    width: 148px;
    font: 10px/16px "Liberation Mono", monospace;
}
.status .floor {
    width: 78px;
}
.status .level {
    width: 98px;
}
.status .count {
    width: 48px;
}
.status .hint {
    flex: 1;
}
```
FILE: model.js
```
const model = document.getElementById('model');
const GREY = '#a9a9a9';
const DARK = '#868686';
const OLIVE = '#b4b000';
const PURPLE = '#5600b0';
const GREEN = '#00b400';
const LIME = '#00e000';
const RED = '#ff0000';

function add(name, attrs) {
    const el = document.createElementNS('http://www.w3.org/2000/svg', name);
    for (const key in attrs) el.setAttribute(key, attrs[key]);
    model.appendChild(el);
    return el;
}
function poly(points, fill) {
    add('polygon', { points, fill, 'shape-rendering': 'crispEdges' });
}
function line(points, stroke, width) {
    add('polyline', { points, stroke, fill: 'none', 'stroke-width': width || 3, 'shape-rendering': 'crispEdges' });
}
function text(x, y, str, turn, size) {
    const el = add('text', { x, y, fill: '#dcdcdc', 'font-size': size || 43, 'text-anchor': 'middle' });
    if (turn) el.setAttribute('transform', `rotate(${turn} ${x} ${y})`);
    el.textContent = str;
}

// left side wall
poly('246,165 262,150 300,310 232,1125 205,1120 174,1015 197,740', OLIVE);
for (let i = 0; i < 20; i++) {
    const y = 250 + i * 45;
    const x = 240 - (y - 250) * 0.085;
    line(`${x},${y - 40} ${x + 20},${y + 15} ${x + 26},${y + 65}`, GREEN, 5);
    line(`${x + 16},${y - 30} ${x + 40},${y + 35}`, LIME, 4);
    line(`${x + 28},${y + 10} ${x + 52},${y + 18}`, GREEN, 7);
    line(`${x + 10},${y} ${x + 14},${y + 25}`, GREY, 4);
    line(`${x + 34},${y - 10} ${x + 37},${y + 20}`, GREY, 4);
}

// lower roof, left
poly('262,150 440,150 440,205 262,205', OLIVE);
poly('270,195 385,195 420,225 460,250 460,370 300,320 272,235', GREY);
poly('385,160 440,160 432,320 395,300', OLIVE);
line('258,155 250,330', OLIVE, 6);
line('265,198 385,198', GREEN, 3);
line('275,236 385,236 410,300', PURPLE, 4);
line('358,238 400,360', GREEN, 5);
line('345,238 400,238 408,290', LIME, 3);

// curved bay
poly('300,310 345,302 425,340 450,360 415,440 348,1184 290,1170 243,1135', OLIVE);
for (let r = 0; r < 19; r++) {
    for (let c = 0; c < 4; c++) {
        const y = 352 + r * 45.3 + [0, 8, 13, 15][c];
        const x = 312 + c * 27 - (y - 345) * 0.083;
        poly(`${x},${y} ${x + 17},${y + 4} ${x + 15},${y + 31} ${x - 2},${y + 26}`, GREY);
        line(`${x},${y + 32} ${x + 15},${y + 36}`, '#dede00', 3);
    }
    const y = 378 + r * 45.3;
    const x = 402 - (y - 378) * 0.083;
    line(`${x},${y + 28} ${x + 12},${y + 30}`, GREEN, 7);
}
line('298,305 262,750 228,1125', PURPLE, 18);
line('306,330 250,900', '#7a3fc4', 3);

// service shaft
poly('414,360 462,325 462,360 392,1190 350,1183', DARK);
line('402,480 346,1183', PURPLE, 7);
line('452,330 380,1187', PURPLE, 10);

// main facade
const leftEdge = y => 458 - (y - 325) * 0.0806;
const rightEdge = y => 886 - (y - 325) * 0.083;
const at = (f, y) => leftEdge(y) + (rightEdge(y) - leftEdge(y)) * f;
function band(a, b, fill, y1, y2) {
    poly(`${at(a, y1)},${y1} ${at(b, y1)},${y1} ${at(b, y2)},${y2} ${at(a, y2)},${y2}`, fill);
}
band(0, 1, GREY, 298, 1193);
[[0, .04], [.11, .165], [.175, .23], [.305, .365], [.45, .505], [.515, .565], [.635, .695], [.775, .825], [.835, .885], [.965, 1]]
    .forEach(b => band(b[0], b[1], OLIVE, 325, 1193));
[.298, .625, .95].forEach(f => band(f, f + .014, PURPLE, 380, 1193));
for (let k = 0; k < 19; k++) {
    const y = 376 + k * 45.35;
    [[.04, .29], [.37, .62], [.7, .95]].forEach((s, i) => {
        line(`${at(s[0], y)},${y - 10} ${at(s[1], y)},${y - 12}`, (k + i) % 3 ? LIME : '#e4e400', 3);
        const mid = (s[0] + s[1]) / 2;
        line(`${at(mid, y)},${y - 12} ${at(mid, y)},${y}`, GREEN, 6);
        line(`${at(mid + .01, y)},${y + 8} ${at(mid + .01, y)},${y + 32}`, '#8f8c00', 3);
    });
    line(`${at(0, y) - 4},${y + 1} ${at(1, y)},${y}`, GREEN, 8);
}

// upper roof
poly('450,180 850,175 885,245 885,300 475,300 450,262', '#969696');
poly('455,262 550,202 740,202 880,252 885,300 475,300', GREY);
poly('450,180 490,180 490,225 450,250', DARK);
poly('525,185 590,185 560,212 525,212', DARK);
line('415,265 550,205', '#666', 8);
line('745,205 870,250', '#666', 8);
line('460,320 885,322', GREEN, 12);
line('600,318 750,318', LIME, 4);
line('470,302 880,302', LIME, 3);
line('490,184 745,184', GREEN, 9);
line('545,226 795,226', LIME, 4);
line('525,210 530,300', LIME, 3);
line('588,210 600,300', LIME, 3);
line('660,195 672,300', LIME, 3);
line('732,205 740,285', LIME, 3);
line('745,175 845,212', LIME, 3);
line('745,190 870,245', GREEN, 4);
line('575,186 745,186', PURPLE, 5);
[590, 732].forEach(x => poly(`${x - 12},180 ${x + 12},172 ${x + 12},205 ${x - 10},205`, PURPLE));
[[466, 312, 18], [593, 312, 12], [754, 312, 10], [877, 310, 18], [862, 237, 14], [845, 190, 10]]
    .forEach(p => line(`${p[0]},${p[1] - 14} ${p[0]},${p[1] + 14}`, PURPLE, p[2]));
[600, 672, 744].forEach(x => {
    add('ellipse', { cx: x, cy: 165, rx: 18, ry: 14, fill: '#858585' });
    line(`${x},165 ${x},180`, '#777', 12);
});
[566, 778].forEach(x => {
    add('ellipse', { cx: x, cy: 268, rx: 15, ry: 19, fill: '#777' });
    add('ellipse', { cx: x, cy: 266, rx: 9, ry: 11, fill: '#999' });
    line(`${x + 3},278 ${x + 3},300`, '#868686', 24);
});

// grid dimensions
text(232, 150, '4500', 0, 44);
text(322, 150, '6600', 0, 44);
text(398, 150, '800', 0, 44);
text(460, 152, '8400', 0, 44);
text(510, 150, '8400', 0, 44);
text(616, 150, '8400', 0, 44);
text(757, 150, '8400', 0, 44);
text(148, 185, '2400', -97);
text(165, 235, '6000', -97);
text(190, 230, '6600', -92);
text(214, 290, '6600', -92);
text(165, 260, '2000', -97);
text(870, 155, '6000', 85);
text(898, 185, '6600', -92);
text(930, 215, '6300', -92);
text(915, 290, '6600', -92);
text(925, 250, '2000', -92);

// stair tower
line('425,110 425,245', PURPLE, 10);
line('443,110 446,250', PURPLE, 12);
line('452,190 450,245', PURPLE, 20);
line('410,145 416,190 408,300', PURPLE, 6);
poly('429,108 443,108 443,132 429,132', '#8c8c8c');
poly('455,184 487,184 480,232 455,238', '#818181');
line('388,112 565,112', LIME, 8);
line('565,105 562,130', PURPLE, 10);
line('395,118 388,215 410,260', LIME, 5);
line('535,112 570,175', LIME, 6);
line('480,120 505,180', LIME, 5);
line('545,118 550,178', PURPLE, 7);
[128, 142, 156, 168].forEach(y => line(`470,${y} 575,${y + 3}`, y % 8 ? LIME : GREEN, 5));
line('570,128 825,128 838,155', GREEN, 3);
line('415,268 455,262', LIME, 8);
line('395,175 400,240', LIME, 4);

// construction lines
line('120,155 845,152 910,152', '#008000', 3);
line('180,155 850,152', RED, 3);
line('220,187 385,187', RED, 3);
line('230,205 420,205', RED, 3);
line('265,223 390,223', '#900000', 3);
line('170,257 415,257', RED, 3);
line('210,266 455,266', RED, 3);
line('235,319 460,319', RED, 3);
line('192,155 245,320 238,290', RED, 3);
line('265,155 335,370', RED, 3);
line('378,155 450,370', RED, 3);
line('462,330 476,370', '#900000', 3);
line('235,283 380,345', '#900000', 3);
line('230,349 940,352', '#800000', 3);
line('230,333 885,333', '#008000', 3);
line('230,345 885,345', '#008000', 3);
line('605,335 615,365', '#900000', 3);
line('745,335 755,365', '#900000', 3);
line('690,152 694,170', RED, 3);
line('833,152 842,185', RED, 3);
line('825,317 880,317', RED, 3);
line('160,322 235,322', '#008000', 3);
line('830,317 960,317', '#008000', 3);
line('930,421 1047,421', '#900000', 3);
line('930,442 1053,442', '#900000', 3);
line('870,463 998,463', '#900000', 3);
line('985,280 1022,376', '#900000', 3);

// grid bubbles
[['1-K', 170, 78], ['1', 243, 78], ['2', 355, 78], ['3', 385, 78], ['4', 412, 78], ['9', 525, 78], ['11', 667, 78], ['13', 808, 76],
    ['K', 78, 154], ['L', 88, 178], ['F', 93, 203], ['B', 112, 267], ['A', 130, 322],
    ['K', 944, 149], ['J', 955, 170], ['G', 960, 193], ['D', 974, 250], ['B', 980, 262], ['A', 997, 318], ['13', 908, 402]
].forEach(b => {
    add('circle', { cx: b[1], cy: b[2], r: 37, fill: 'none', stroke: '#007d00', 'stroke-width': 3 });
    text(b[1], b[2] + 15, b[0]);
});

// podium
poly('112,1015 175,1015 205,1120 240,1135 345,1182 390,1190 815,1190 822,1220 325,1220 150,1145', GREY);
poly('112,1020 150,1145 145,1270 98,1170', OLIVE);
poly('150,1150 325,1222 325,1270 150,1205', OLIVE);
poly('98,1130 130,1235 148,1270 310,1335 800,1335 795,1377 228,1380 132,1336 96,1220', DARK);
poly('150,1205 320,1275 320,1335 145,1265', '#999');
poly('320,1222 828,1218 828,1335 310,1335', OLIVE);
poly('390,1278 808,1280 808,1300 392,1300', '#000');
[[330, 380], [398, 445], [465, 520], [560, 650], [685, 738], [748, 800]].forEach(p => {
    poly(`${p[0]},1240 ${p[1]},1240 ${p[1]},1263 ${p[0]},1263`, GREY);
});
[[325, 370], [395, 445], [462, 525], [535, 640], [683, 728], [742, 795]].forEach(p => {
    poly(`${p[0]},1300 ${p[1]},1300 ${p[1]},1333 ${p[0]},1333`, DARK);
});
poly('192,1210 262,1240 262,1195 205,1178', GREY);
poly('148,1240 162,1247 162,1268 148,1263', '#000');
poly('235,1280 260,1280 260,1308 235,1298', '#000');
line('200,1265 225,1245 265,1270 320,1300', GREEN, 9);
poly('205,1235 235,1235 235,1290 205,1280', PURPLE);
line('112,1018 150,1145 200,1165 325,1220 808,1225', GREEN, 11);
line('112,1018 175,1022 210,1120', GREEN, 5);
line('110,1012 175,1014', '#e0dc00', 4);
line('125,1060 185,1060', GREEN, 4);
line('140,1092 193,1092', GREEN, 3);
line('200,1165 240,1138 270,1160 345,1182', GREEN, 6);
line('120,1195 195,1215 320,1272 808,1278', GREEN, 11);
line('130,1205 200,1210 225,1190', GREEN, 5);
line('390,1198 815,1198', GREEN, 4);
line('450,1190 462,1220', LIME, 5);
line('590,1190 602,1218', LIME, 5);
line('528,1190 540,1218', '#e0dc00', 5);
line('735,1190 745,1218', '#e0dc00', 6);
line('812,1190 820,1222', '#e0dc00', 5);
line('670,1217 830,1217', '#ffff00', 4);
line('145,1265 310,1334 810,1334', '#d6d200', 3);
line('570,1258 650,1258', '#ffff00', 3);
line('430,1280 445,1310', GREEN, 5);
line('575,1280 583,1310', GREEN, 5);
[[112, 1020, 108, 1180, 7], [124, 1050, 122, 1190, 7], [146, 1120, 140, 1250, 9], [190, 1160, 176, 1355, 9], [281, 1198, 266, 1393, 11],
    [321, 1213, 314, 1333, 11], [392, 1213, 374, 1376, 11], [535, 1215, 518, 1376, 9], [676, 1215, 660, 1376, 9], [814, 1213, 808, 1336, 10],
    [370, 1290, 372, 1376, 14], [498, 1280, 498, 1376, 9], [505, 1280, 511, 1376, 7], [638, 1280, 638, 1376, 9], [648, 1280, 650, 1376, 7], [785, 1284, 783, 1376, 16],
    [98, 1140, 96, 1220, 4], [105, 1080, 104, 1160, 4], [130, 1230, 134, 1335, 5], [486, 1278, 490, 1300, 16], [628, 1278, 628, 1300, 18], [765, 1284, 765, 1300, 14]
].forEach(c => line(`${c[0]},${c[1]} ${c[2]},${c[3]}`, PURPLE, c[4]));
line('124,1278 160,1298 191,1312', RED, 9);
line('132,1314 160,1292 188,1276', RED, 9);

// axis tripod
line('-744,1290 -630,1290', RED, 8);
poly('-632,1277 -597,1290 -632,1303', RED);
line('-744,1290 -735,1195', '#0a6cf0', 9);
poly('-748,1195 -721,1195 -732,1161', '#0a6cf0');
line('-744,1288 -756,1244', LIME, 6);
poly('-766,1246 -751,1242 -764,1226', LIME);
line('-770,1146 -746,1146 -770,1172 -744,1172', '#0a6cf0', 4);
line('-734,1212 -724,1225 -714,1210', '#00c000', 3);
line('-724,1225 -726,1240', '#00c000', 3);
line('-642,1253 -614,1279', RED, 3);
line('-614,1253 -642,1279', RED, 3);
```
